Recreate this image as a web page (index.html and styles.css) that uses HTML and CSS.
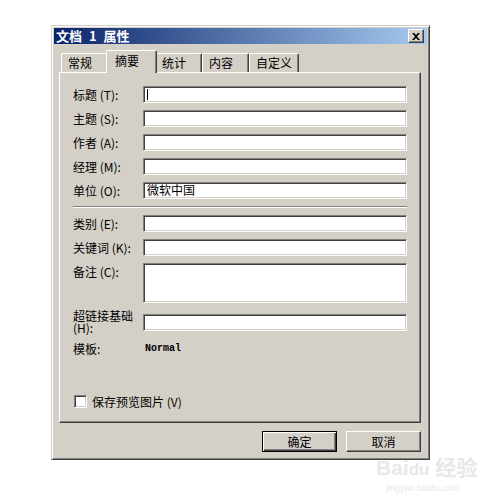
FILE: index.html
```html
<!DOCTYPE html>
<html lang="zh-CN">
<head>
    <meta charset="UTF-8">
    <title>文档 1 属性</title>
    <link rel="stylesheet" href="styles.css">
</head>
<body>
    <div class="dialog">
        <div class="titlebar">
            <span class="title">文档 1 属性</span>
            <button class="close-btn" title="关闭">
                <svg width="8" height="7" viewBox="0 0 8 7">
                    <path d="M0 0h2l2 2 2-2h2l-3 3.5 3 3.5h-2l-2-2-2 2h-2l3-3.5z" fill="#000"/>
                </svg>
            </button>
        </div>

        <div class="dialog-body">
            <div class="tabs">
                <div class="tab">常规</div>
                <div class="tab active">摘要</div>
                <div class="tab">统计</div>
                <div class="tab">内容</div>
                <div class="tab">自定义</div>
            </div>

            <div class="panel">
                <div class="row">
                    <span class="label">标题 (T):</span>
                    <div class="field"><span class="caret"></span></div>
                </div>
                <div class="row">
                    <span class="label">主题 (S):</span>
                    <div class="field"></div>
                </div>
                <div class="row">
                    <span class="label">作者 (A):</span>
                    <div class="field"></div>
                </div>
                <div class="row">
                    <span class="label">经理 (M):</span>
                    <div class="field"></div>
                </div>
                <div class="row">
                    <span class="label">单位 (O):</span>
                    <div class="field">微软中国</div>
                </div>

                <div class="separator"></div>

                <div class="row">
                    <span class="label">类别 (E):</span>
                    <div class="field"></div>
                </div>
                <div class="row">
                    <span class="label">关键词 (K):</span>
                    <div class="field"></div>
                </div>
                <div class="row row-top">
                    <span class="label">备注 (C):</span>
                    <div class="field field-tall"></div>
                </div>
                <div class="row row-link">
                    <span class="label label-wrap">超链接基础 (H):</span>
                    <div class="field"></div>
                </div>
                <div class="row row-template">
                    <span class="label">模板:</span>
                    <span class="template-name">Normal</span>
                </div>

                <label class="check-row">
                    <span class="checkbox"></span>
                    <span>保存预览图片 (V)</span>
                </label>
            </div>

            <div class="buttons">
                <button class="btn btn-default">确定</button>
                <button class="btn">取消</button>
            </div>
        </div>
    </div>

    <div class="watermark">
        <span class="wm-brand">Bai<span class="wm-du">du</span> 经验</span>
        <span class="wm-url">jingyan.baidu.com</span>
    </div>
</body>
</html>
```

FILE: styles.css
```css
:root {
    --face: #d4d0c8;
    --shadow: #808080;
    --dark: #404040;
    --light: #ffffff;
}

body {
    margin: 0;
    background: #fff;
    font-family: "Noto Sans CJK SC", "Liberation Sans", sans-serif;
    font-size: 12px;
    color: #000;
}

.dialog {
    position: relative;
    margin: 25px 0 0 51px;
    width: 379px;
    height: 435px;
    box-sizing: border-box;
    padding: 2px;
    background: var(--face);
    border: 1px solid;
    border-color: var(--face) var(--dark) var(--dark) var(--face);
    box-shadow: inset 1px 1px var(--light), inset -1px -1px var(--shadow);
}

.titlebar {
    height: 16px;
    display: flex;
    align-items: center;
    justify-content: space-between;
    padding: 0 3px 0 2px;
    background: linear-gradient(to right, #0a246a, #a6caf0);
}

.title {
    color: #fff;
    font-weight: bold;
    font-size: 13px;
    word-spacing: 4px;
    line-height: 16px;
}

.close-btn {
    width: 16px;
    height: 14px;
    padding: 0;
    display: flex;
    align-items: center;
    justify-content: center;
    background: var(--face);
    border: 1px solid;
    border-color: var(--light) var(--dark) var(--dark) var(--light);
    box-shadow: inset -1px -1px var(--shadow);
}

.dialog-body {
    padding: 6px 6px 0 5px;
}

.tabs {
    display: flex;
    height: 22px;
    padding-left: 2px;
    align-items: flex-end;
}

.tab {
    height: 19px;
    box-sizing: border-box;
    min-width: 47px;
    padding: 0 6px;
    line-height: 18px;
    border: 1px solid var(--light);
    border-bottom: none;
    border-right-color: var(--dark);
    border-radius: 2px 2px 0 0;
    box-shadow: inset -1px 0 var(--shadow);
}

.tab.active {
    position: relative;
    z-index: 1;
    height: 23px;
    margin: 0 -2px -1px;
    padding: 0 8px;
    min-width: 51px;
    line-height: 20px;
    background: var(--face);
}

.panel {
    height: 351px;
    box-sizing: border-box;
    padding: 13px;
    border: 1px solid;
    border-color: var(--light) var(--dark) var(--dark) var(--light);
    box-shadow: inset -1px -1px var(--shadow);
}

.row {
    display: flex;
    align-items: center;
    margin-bottom: 7px;
}

.row-top {
    align-items: flex-start;
}

.row-link {
    margin-bottom: 6px;
}

.label {
    width: 70px;
    flex-shrink: 0;
    line-height: 17px;
    white-space: pre;
}

.label-wrap {
    white-space: normal;
    line-height: 12px;
    width: 64px;
    margin-right: 6px;
}

.field {
    width: 264px;
    height: 17px;
    box-sizing: border-box;
    padding: 0 3px;
    line-height: 14px;
    background: #fff;
    border: 1px solid;
    border-color: var(--shadow) var(--light) var(--light) var(--shadow);
    box-shadow: inset 1px 1px var(--dark), inset -1px -1px var(--face);
}

.field-tall {
    height: 40px;
}

.caret {
    display: inline-block;
    width: 1px;
    height: 11px;
    margin-top: 2px;
    background: #000;
    vertical-align: top;
}

.template-name {
    font-family: "Liberation Mono", monospace;
    font-size: 10px;
    font-weight: bold;
    line-height: 17px;
    padding-left: 2px;
}

.separator {
    margin: 2px 0 7px;
    border-top: 1px solid var(--shadow);
    border-bottom: 1px solid var(--light);
}

.check-row {
    display: flex;
    align-items: center;
    gap: 5px;
    margin-top: 38px;
    margin-left: 1px;
    line-height: 13px;
}

.checkbox {
    width: 13px;
    height: 13px;
    box-sizing: border-box;
    background: #fff;
    border: 1px solid;
    border-color: var(--shadow) var(--light) var(--light) var(--shadow);
    box-shadow: inset 1px 1px var(--dark), inset -1px -1px var(--face);
}

.buttons {
    display: flex;
    justify-content: flex-end;
    gap: 9px;
    margin-top: 8px;
    padding-right: 0;
}

.btn {
    width: 75px;
    height: 21px;
    padding: 0;
    font-family: inherit;
    font-size: 12px;
    background: var(--face);
    border: 1px solid;
    border-color: var(--light) var(--dark) var(--dark) var(--light);
    box-shadow: inset -1px -1px var(--shadow);
}

.btn-default {
    border: 1px solid #000;
    box-shadow: inset 1px 1px var(--light), inset -1px -1px var(--dark), inset -2px -2px var(--shadow);
}

.watermark {
    position: absolute;
    left: 376px;
    top: 456px;
    display: flex;
    flex-direction: column;
    color: #e8e8e8;
    font-family: "Liberation Sans", "Noto Sans CJK SC", sans-serif;
}

.wm-brand {
    font-size: 21px;
    font-weight: bold;
    line-height: 24px;
}

.wm-du {
    font-size: 17px;
}

.wm-url {
    font-size: 9px;
    line-height: 12px;
    margin-left: 10px;
}
```
